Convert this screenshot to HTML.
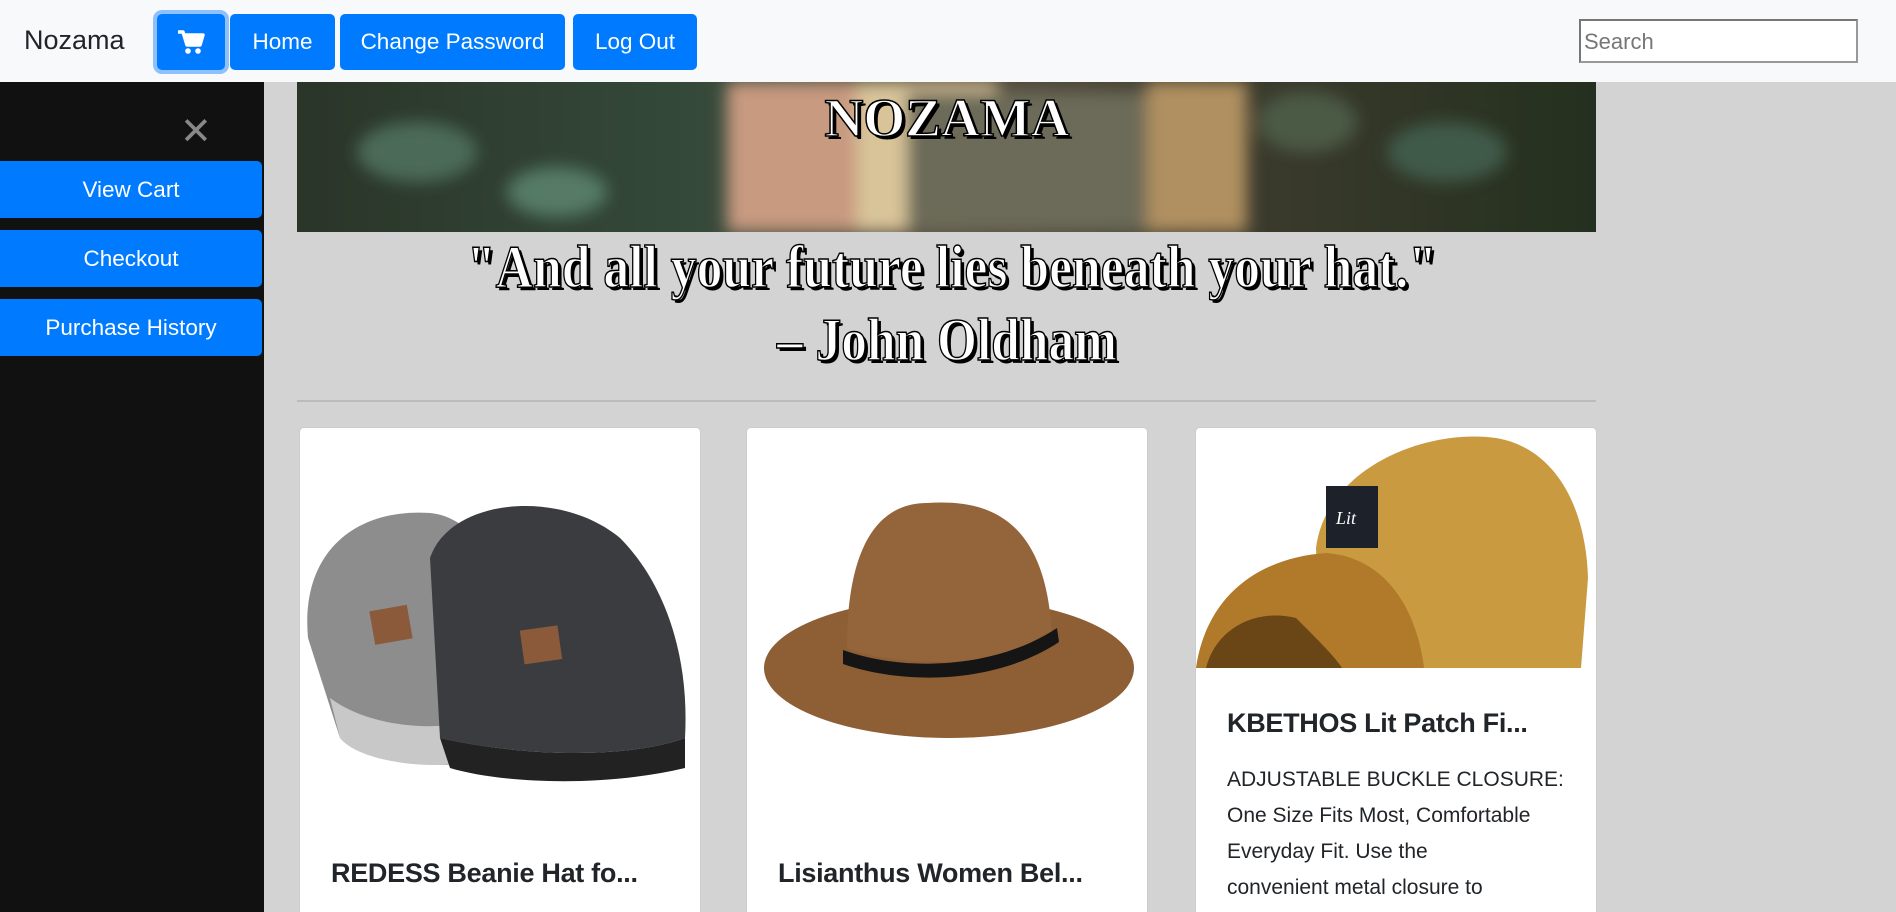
<!DOCTYPE html>
<html><head><meta charset="utf-8">
<style>
*{box-sizing:border-box;margin:0;padding:0}
html{width:1896px;height:912px;overflow:hidden}
body{width:1896px;height:912px;overflow:hidden;background:#d3d3d3;font-family:"Liberation Sans",sans-serif;position:relative}
.nav{position:absolute;left:0;top:0;width:1896px;height:82px;background:#f8f9fa}
.brand{position:absolute;left:24px;top:25px;font-size:27px;color:#212529}
.btn{position:absolute;top:14px;height:56px;background:#007bff;color:#fff;border-radius:5px;font-size:22.5px;line-height:56px;text-align:center}
.search{position:absolute;left:1579px;top:19px;width:279px;height:44px;border:2px solid #999;border-top-color:#777;border-left-color:#777;background:#fff;font-size:22px;color:#777;padding:8px 3px}
.side{position:absolute;left:0;top:82px;width:264px;height:830px;background:#111}
.sbtn{position:absolute;left:0;width:262px;height:57px;background:#007bff;color:#fff;border-radius:0 5px 5px 0;font-size:22.5px;line-height:57px;text-align:center}
.card{position:absolute;top:427px;width:402px;height:485px;background:#fff;border:1px solid #ccc;border-bottom:none;border-radius:5px 5px 0 0;overflow:hidden}
.title{position:absolute;left:31px;font-size:27px;font-weight:bold;color:#212529;letter-spacing:-0.3px}
.txt{position:absolute;left:31px;font-size:21px;line-height:36px;color:#212529;width:345px}
</style></head><body>
<div class="nav">
<div class="brand">Nozama</div>
<div class="btn" style="left:157px;width:68px;box-shadow:0 0 0 4px #8ec1fb">
<svg width="28" height="26" viewBox="0 0 28 26" style="margin-top:15px"><path d="M1 3h5l4 13h13l3-10H8" fill="none" stroke="#fff" stroke-width="3.5" stroke-linejoin="round"/><rect x="9" y="6" width="15" height="9" fill="#fff"/><circle cx="11" cy="22" r="2.8" fill="#fff"/><circle cx="21" cy="22" r="2.8" fill="#fff"/></svg></div>
<div class="btn" style="left:230px;width:105px">Home</div>
<div class="btn" style="left:340px;width:225px">Change Password</div>
<div class="btn" style="left:573px;width:124px">Log Out</div>
<div class="search">Search</div>
</div>
<div class="side">
<div style="position:absolute;left:180px;top:30px;color:#888;font-size:38px;line-height:40px">✕</div>
<div class="sbtn" style="top:79px">View Cart</div>
<div class="sbtn" style="top:148px">Checkout</div>
<div class="sbtn" style="top:217px">Purchase History</div>
</div>
<svg style="position:absolute;left:297px;top:82px" width="1299" height="150">
<defs>
<linearGradient id="bg" x1="0" x2="1"><stop offset="0" stop-color="#2a3528"/><stop offset=".3" stop-color="#34493a"/><stop offset=".5" stop-color="#5a5040"/><stop offset=".75" stop-color="#3a3a2c"/><stop offset="1" stop-color="#24301f"/></linearGradient>
<filter id="bl"><feGaussianBlur stdDeviation="8"/></filter>
</defs>
<rect width="1299" height="150" fill="url(#bg)"/>
<g filter="url(#bl)">
<ellipse cx="120" cy="70" rx="60" ry="30" fill="#4c6a58"/><ellipse cx="260" cy="110" rx="50" ry="25" fill="#557a66"/>
<ellipse cx="1150" cy="70" rx="60" ry="30" fill="#3f5a48"/><ellipse cx="1010" cy="40" rx="50" ry="30" fill="#4b5a44"/>
<rect x="430" y="0" width="130" height="150" fill="#c89a80"/>
<rect x="560" y="0" width="140" height="150" fill="#d9c49a"/>
<rect x="610" y="10" width="240" height="140" fill="#6c6a58"/>
<rect x="850" y="0" width="100" height="150" fill="#b09060"/>
</g>
<text x="650" y="54" text-anchor="middle" font-family="Liberation Serif" font-weight="bold" font-size="54" textLength="245" lengthAdjust="spacingAndGlyphs" fill="#000" transform="translate(3,3)">NOZAMA</text>
<text x="650" y="54" text-anchor="middle" font-family="Liberation Serif" font-weight="bold" font-size="54" textLength="245" lengthAdjust="spacingAndGlyphs" fill="#fff" stroke="#000" stroke-width="1.5">NOZAMA</text>
</svg>
<svg style="position:absolute;left:297px;top:232px" width="1299" height="180">
<g font-family="Liberation Serif" font-weight="bold" font-size="60" text-anchor="middle">
<text x="655" y="55" textLength="970" lengthAdjust="spacingAndGlyphs" fill="#000" transform="translate(3,3)">"And all your future lies beneath your hat."</text>
<text x="655" y="55" textLength="970" lengthAdjust="spacingAndGlyphs" fill="#fff" stroke="#000" stroke-width="1.5">"And all your future lies beneath your hat."</text>
<text x="650" y="128" textLength="340" lengthAdjust="spacingAndGlyphs" fill="#000" transform="translate(3,3)">– John Oldham</text>
<text x="650" y="128" textLength="340" lengthAdjust="spacingAndGlyphs" fill="#fff" stroke="#000" stroke-width="1.5">– John Oldham</text>
</g>
<rect x="0" y="168" width="1299" height="2" fill="#bbb"/>
</svg>

<div class="card" style="left:299px">
<svg width="402" height="400" style="position:absolute;top:0;left:0">
<path d="M8 210 C0 120 60 80 130 85 C180 90 210 150 200 230 L190 330 C150 345 90 335 40 310 Z" fill="#8d8d8d"/>
<path d="M40 310 C60 335 140 345 190 330 L185 290 C140 305 70 300 30 270 Z" fill="#c8c8c8"/>
<path d="M130 130 C150 70 260 60 320 110 C360 150 390 220 385 310 C330 330 230 330 140 310 Z" fill="#3b3c40"/>
<path d="M140 310 C230 330 330 330 385 310 L385 340 C300 360 200 355 150 340 Z" fill="#222"/>
<rect x="72" y="180" width="38" height="34" fill="#8a5a3a" transform="rotate(-10 90 197)"/>
<rect x="222" y="200" width="38" height="34" fill="#8a5a3a" transform="rotate(-8 240 217)"/>
</svg>
<div class="title" style="top:430px">REDESS Beanie Hat fo...</div>
</div>
<div class="card" style="left:746px">
<svg width="402" height="400" style="position:absolute;top:0;left:0">
<ellipse cx="202" cy="240" rx="185" ry="70" fill="#8e5e34"/>
<path d="M100 220 C100 120 130 75 180 75 C230 72 300 80 305 210 C260 240 150 240 100 220 Z" fill="#94643a"/>
<path d="M96 222 C160 245 250 240 310 200 L312 214 C250 255 160 258 96 236 Z" fill="#151515"/>
</svg>
<div class="title" style="top:430px">Lisianthus Women Bel...</div>
</div>
<div class="card" style="left:1195px">
<svg width="402" height="240" style="position:absolute;top:0;left:0">
<path d="M120 120 C130 40 230 0 300 10 C360 20 390 80 392 150 L385 240 L220 245 C160 200 120 170 120 120 Z" fill="#c99a40"/>
<path d="M0 240 C10 170 60 130 130 125 C200 130 230 200 230 270 C150 250 60 240 0 240 Z" fill="#b07a2a"/>
<path d="M10 240 C20 200 60 180 100 190 C130 220 150 240 150 250 Z" fill="#6a4616"/>
<rect x="130" y="58" width="52" height="62" fill="#1d2129"/>
<text x="140" y="96" fill="#fff" font-family="Liberation Serif" font-style="italic" font-size="18">Lit</text>
</svg>
<div class="title" style="top:280px">KBETHOS Lit Patch Fi...</div>
<div class="txt" style="top:334px">ADJUSTABLE BUCKLE CLOSURE: One Size Fits Most, Comfortable Everyday Fit. Use the<br>convenient metal closure to</div>
</div>
</body></html>
